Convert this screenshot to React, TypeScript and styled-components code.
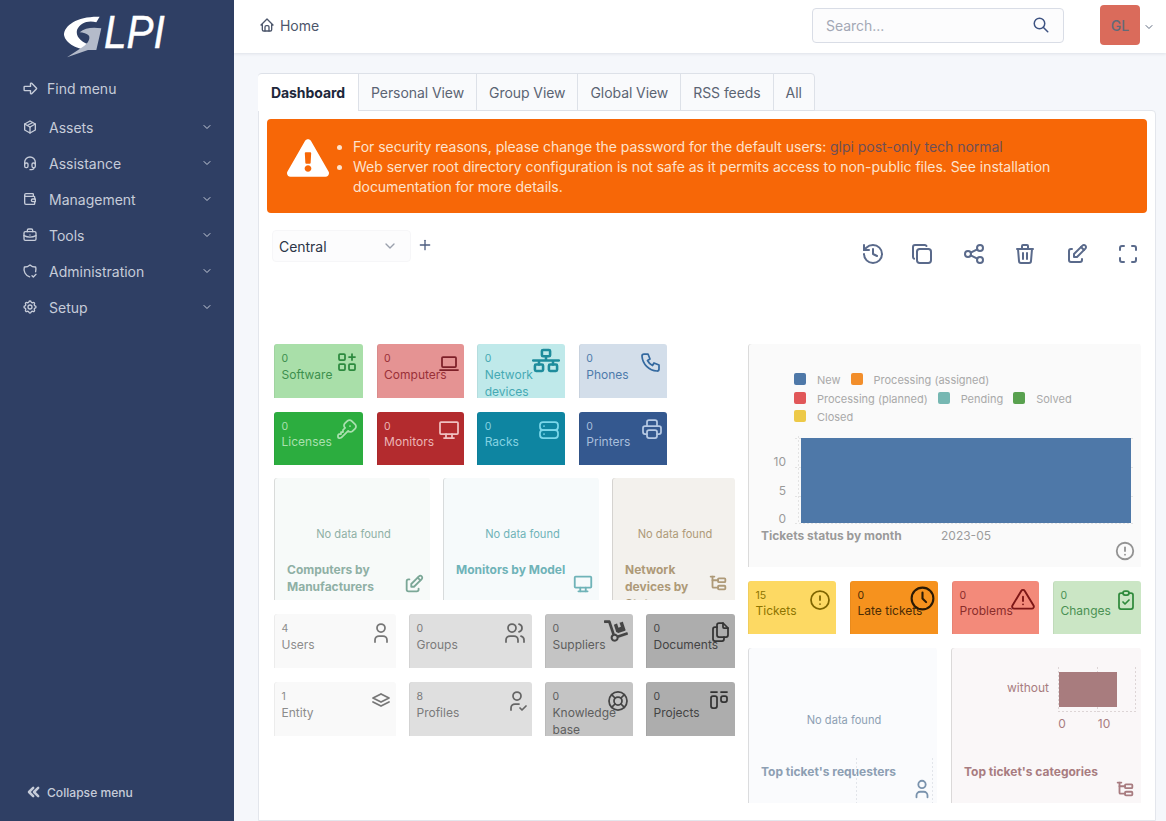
import React from "react";
import styled, { createGlobalStyle } from "styled-components";
import { FaDolly, FaExclamationTriangle } from "react-icons/fa";
import { History } from "lucide-react";
import {
  TbAlertCircle, TbAlertTriangle, TbApps, TbArrowBigRight, TbBriefcase, TbChevronDown, TbChevronsLeft,
  TbClipboardCheck, TbClock, TbCopy, TbDeviceDesktop, TbDeviceLaptop, TbEdit, TbFiles, TbHeadset,
  TbHome, TbKey, TbLayoutKanban, TbLifebuoy, TbMaximize, TbPackage, TbPhone, TbPlus, TbPrinter, TbSearch,
  TbServer, TbSettings, TbShare, TbShieldCheck, TbStack, TbSubtask, TbTrash, TbUser, TbUserCheck,
  TbUsers, TbWallet,
} from "react-icons/tb";

const Global = createGlobalStyle`
  html, body { margin: 0; padding: 0; height: 100%; overflow: hidden; }
  body { font-family: Inter, "Liberation Sans", sans-serif; background: #f5f7fb; color: #1d273b; }
  * { box-sizing: border-box; }
`;

const Page = styled.div`display: flex; width: 1166px; height: 821px; overflow: hidden;`;
const Sidebar = styled.aside`
  width: 234px; flex: none; background: #2f3f64; color: #c6ccd9; display: flex; flex-direction: column;
  font-size: 14px;
`;
const LogoWrap = styled.div`height: 70px; display: flex; padding: 15px 0 0 63px;`;
const LogoText = styled.span`
  font-family: "Liberation Sans", sans-serif; font-style: italic; font-size: 47px; line-height: 38px; color: #fff;
  -webkit-text-stroke: 0.5px #fff; margin: -2px 0 0 1px; transform: scaleX(.86); transform-origin: left; width: 60px;
`;
const FindRow = styled.div`
  display: flex; align-items: center; height: 36px; padding-left: 22px; gap: 8px; margin-bottom: 3px;
`;
const MenuRow = styled.div`
  display: flex; align-items: center; height: 36px; padding: 0 21.5px 0 22px; gap: 11px;
  & > span { flex: 1; }
`;
const Spacer = styled.div`flex: 1;`;
const Collapse = styled.div`
  display: flex; align-items: center; gap: 3px; height: 36px; padding-left: 24px; margin-bottom: 11px; font-size: 12.1px; font-weight: 500;
`;
const Main = styled.main`flex: 1; display: flex; flex-direction: column; min-width: 0;`;
const Header = styled.header`
  height: 53px; flex: none; background: #fff; box-shadow: 0 1px 3px rgba(30,40,70,.1); display: flex; align-items: center;
  padding: 0 11px 0 25px; position: relative; z-index: 1;
`;
const Crumb = styled.div`display: flex; align-items: center; gap: 5px; font-size: 14px; letter-spacing: -0.03px; color: #4c566b; flex: 1; margin-bottom: 3px;`;
const SearchBox = styled.div`
  width: 252px; height: 35px; margin-bottom: 3px; border: 1px solid #d9dde6; border-radius: 4px; background: #fcfcfd; display: flex; align-items: center;
  justify-content: space-between; padding: 0 13px; font-size: 14px; letter-spacing: -0.03px; color: #a3a8b5; margin-right: 36px;
`;
const Avatar = styled.div`
  width: 40px; height: 40px; background: #da6b5b; border-radius: 4px; color: #626a78; font-size: 14px; font-weight: 500;
  display: flex; align-items: center; justify-content: center; margin-bottom: 3px; margin-right: 3px;
`;
const Content = styled.div`flex: 1; padding: 20px 10px 0 24px; display: flex; flex-direction: column; min-height: 0;`;
const Tabs = styled.nav`display: flex; height: 38px; flex: none; position: relative; z-index: 1; margin-bottom: -1px;`;
const Tab = styled.div<{ $active?: boolean }>`
  display: flex; align-items: center; padding: 0 12px; font-size: 14px; letter-spacing: -0.07px;
  border: 1px solid #dde1e8; border-left-width: ${(p) => (p.$active ? 0 : 1)}px; margin-left: ${(p) => (p.$active ? 0 : -1)}px;
  border-bottom-color: ${(p) => (p.$active ? "#fff" : "#dde1e8")};
  border-radius: ${(p) => (p.$active ? "4px 0 0 0" : 0)};
  background: ${(p) => (p.$active ? "#fff" : "#f9fafc")};
  color: ${(p) => (p.$active ? "#1d273b" : "#5b6473")};
  font-weight: ${(p) => (p.$active ? 700 : 400)};
  &:first-child { margin-left: 0; padding: 0 13px; }
  &:last-child { border-radius: 0 4px 0 0; }
`;
const Panel = styled.section`
  flex: 1; background: #fff; border: 1px solid #e3e6ec; border-radius: 0 4px 0 0; padding: 8px 8px 0 8px; min-height: 0; overflow: hidden;
`;
const Alert = styled.div`
  height: 94px; background: #f76707; border-radius: 4px; color: #fde3cd; display: flex; padding: 18px 0 0 20px; font-size: 14px; letter-spacing: -0.03px; line-height: 20px;
`;
const AlertIcon = styled.div`width: 42px; flex: none; color: #fff; line-height: 0;`;
const AlertList = styled.ul`margin: 0; padding: 0 80px 0 24px;`;
const AlertLink = styled.span`color: #6d4f57;`;
const Toolbar = styled.div`display: flex; height: 131px; align-items: flex-start; padding: 17px 0 0 5px;`;
const Select = styled.div`
  width: 139px; height: 32px; background: #fcfcfd; border: 1px solid #f6f6f8; border-radius: 4px; display: flex; align-items: center; justify-content: space-between;
  padding: 0 12px 0 6px; font-size: 14px; letter-spacing: -0.03px; color: #2c3547;
`;
const PlusBtn = styled.div`margin-left: 6px; color: #4d5d80; line-height: 0; margin-top: 7px;`;
const Actions = styled.div`
  margin-left: auto; display: flex; gap: 27.4px; color: #5a6a8b; line-height: 0; margin-top: 12px; margin-right: 7px;
`;
const HistoryIcon = styled(History)`margin-right: -2px;`;
const Board = styled.div`display: flex; gap: 13px; padding-left: 7px;`;
const Column = styled.div<{ $w: number }>`display: flex; flex-direction: column; gap: 14px; width: ${(p) => p.$w}px; flex: none;`;
const Row = styled.div<{ $gap?: number; $pull?: boolean }>`
  display: flex; gap: ${(p) => p.$gap ?? 13}px; margin-top: ${(p) => (p.$pull ? -1 : 0)}px;
`;
const Stat = styled.div<{ $w: number; $bg: string; $fg: string; $h: number }>`
  width: ${(p) => p.$w}px; height: ${(p) => p.$h}px; background: ${(p) => p.$bg}; color: ${(p) => p.$fg}; position: relative; overflow: hidden;
  border-radius: 3px 3px 0 0; padding: 8px 7.5px; font-size: 12px; line-height: 17px; box-shadow: inset 1px 0 0 rgba(0,0,0,.05);
`;
const StatNum = styled.div<{ $tight: boolean }>`
  font-size: 10.5px; line-height: 14px; margin-bottom: ${(p) => (p.$tight ? -1.5 : -0.5)}px;
`;
const StatIcon = styled.div<{ $c: string; $t?: number; $r?: number }>`
  position: absolute; top: ${(p) => p.$t ?? 6}px; right: ${(p) => p.$r ?? 4}px; color: ${(p) => p.$c}; line-height: 0;
`;
const Widget = styled.div<{ $w: number; $h: number; $bg: string; $fg: string }>`
  width: ${(p) => p.$w}px; height: ${(p) => p.$h}px; background: ${(p) => p.$bg}; color: ${(p) => p.$fg}; position: relative; overflow: hidden;
  border-radius: 3px 3px 0 0; box-shadow: inset 1px 0 0 rgba(0,0,0,.12); font-size: 11.1px; flex: none;
`;
const NoData = styled.div<{ $top: number }>`text-align: center; padding: ${(p) => p.$top}px 0 0 3px; line-height: 14px;`;
const WTitle = styled.div<{ $top: number; $w?: number }>`
  font-size: 12px; font-weight: 700; line-height: 17px; padding: ${(p) => p.$top}px 0 0 13px; ${(p) => (p.$w ? `width: ${p.$w}px;` : "")}
`;
const WIcon = styled.div<{ $c: string; $b?: number; $r?: number }>`
  position: absolute; right: ${(p) => p.$r ?? 5}px; bottom: ${(p) => p.$b ?? 5}px; color: ${(p) => p.$c}; line-height: 0;
`;
const Legend = styled.div`padding: 27px 0 0 46px; color: #a9a9a9; font-size: 11px; line-height: 18.5px; white-space: nowrap;`;
const LegendRow = styled.div`display: flex; align-items: center; height: 18.5px;`;
const Swatch = styled.i<{ $c: string }>`
  width: 12px; height: 12px; background: ${(p) => p.$c}; border-radius: 2px; margin-right: 11px; margin-top: -2px; flex: none;
`;
const LegendText = styled.span`margin-right: 10px;`;
const ChartSvg = styled.svg`display: block; margin-top: 7px;`;
const ChartFoot = styled.div`display: flex; font-size: 12px; line-height: 17px; margin-top: 3px; padding-left: 13px; color: #9c9c9c;`;
const ChartFootTitle = styled.span`font-weight: 700; width: 180px; color: #9a9a9a;`;
const SvgLabel = styled.text<{ $c: string }>`font: 12px Inter, sans-serif; fill: ${(p) => p.$c};`;
const OverlaySvg = styled.svg`position: absolute; left: 0; top: 0;`;

const NetworkIcon = ({ size, strokeWidth }: { size?: number; strokeWidth?: number }) => (
  <svg width={size} height={size} viewBox="0 0 24 24" fill="none" stroke="currentColor" strokeWidth={strokeWidth} strokeLinecap="round" strokeLinejoin="round">
    <rect x="8.5" y="2.5" width="7" height="5.5" rx="1" />
    <rect x="2.5" y="15" width="7" height="5.5" rx="1" />
    <rect x="14.5" y="15" width="7" height="5.5" rx="1" />
    <path d="M1 11.5h22M12 8v3.5M6 11.5V15M18 11.5V15" />
  </svg>
);

type S = { n: number; t: string; w: number; bg: string; fg: string; ic: string; Icon: any; size?: number; top?: number; right?: number; sw?: number };
const row1: S[] = [
  { n: 0, t: "Software", w: 89, bg: "#a9dfa9", fg: "#3d8f4d", ic: "#2c8a3e", Icon: TbApps },
  { n: 0, t: "Computers", w: 87, bg: "#e59393", fg: "#9a3038", ic: "#7d1f28", Icon: TbDeviceLaptop, top: 7, right: 3 },
  { n: 0, t: "Network devices", w: 88, bg: "#bfe9ea", fg: "#46a9b4", ic: "#1e8c9c", Icon: NetworkIcon, size: 28, top: 3, right: 5, sw: 2.2 },
  { n: 0, t: "Phones", w: 88, bg: "#d3deea", fg: "#4e7bab", ic: "#356aa0", Icon: TbPhone },
];
const row2: S[] = [
  { n: 0, t: "Licenses", w: 89, bg: "#2cad3f", fg: "#a9e0ae", ic: "#a9e0ae", Icon: TbKey, top: 5 },
  { n: 0, t: "Monitors", w: 87, bg: "#b32b2e", fg: "#ecb6b6", ic: "#f0c0c0", Icon: TbDeviceDesktop, right: 3 },
  { n: 0, t: "Racks", w: 88, bg: "#0e85a1", fg: "#85d2e2", ic: "#7ad7ea", Icon: TbServer },
  { n: 0, t: "Printers", w: 88, bg: "#34588f", fg: "#a9bfdc", ic: "#b5c8e3", Icon: TbPrinter, top: 5, right: 3 },
];
const row4: S[] = [
  { n: 4, t: "Users", w: 122, bg: "#f9f9f9", fg: "#8c8c8c", ic: "#777", Icon: TbUser, top: 7, right: 3 },
  { n: 0, t: "Groups", w: 123, bg: "#dfdfdf", fg: "#7b7b7b", ic: "#666", Icon: TbUsers, top: 7, right: 5 },
  { n: 0, t: "Suppliers", w: 88, bg: "#c4c4c4", fg: "#5e5e5e", ic: "#454545", Icon: FaDolly, top: 5, right: 5 },
  { n: 0, t: "Documents", w: 89, bg: "#adadad", fg: "#444", ic: "#333", Icon: TbFiles, top: 6, right: 3 },
];
const row5: S[] = [
  { n: 1, t: "Entity", w: 122, bg: "#f9f9f9", fg: "#8c8c8c", ic: "#777", Icon: TbStack, top: 6, right: 3 },
  { n: 8, t: "Profiles", w: 123, bg: "#dfdfdf", fg: "#7b7b7b", ic: "#666", Icon: TbUserCheck, top: 7, right: 3 },
  { n: 0, t: "Knowledge base", w: 88, bg: "#c4c4c4", fg: "#5e5e5e", ic: "#454545", Icon: TbLifebuoy, top: 7, right: 3 },
  { n: 0, t: "Projects", w: 89, bg: "#adadad", fg: "#444", ic: "#333", Icon: TbLayoutKanban, top: 6, right: 4 },
];
const row6: S[] = [
  { n: 15, t: "Tickets", w: 88, bg: "#fdd963", fg: "#8d7400", ic: "#7f6500", Icon: TbAlertCircle, top: 7 },
  { n: 0, t: "Late tickets", w: 88, bg: "#f6921e", fg: "#4b2c05", ic: "#2b1a05", Icon: TbClock, size: 29, top: 3, right: 1 },
  { n: 0, t: "Problems", w: 87, bg: "#f38a7a", fg: "#8a2d2a", ic: "#7d1616", Icon: TbAlertTriangle, size: 26, top: 6, right: 3 },
  { n: 0, t: "Changes", w: 88, bg: "#cbe6c5", fg: "#4a9153", ic: "#2f8a3c", Icon: TbClipboardCheck, top: 7, right: 3 },
];

const StatCard = ({ s, h }: { s: S; h: number }) => (
  <Stat $w={s.w} $bg={s.bg} $fg={s.fg} $h={h}>
    <StatNum $tight={h === 53}>{s.n}</StatNum>
    {s.t}
    <StatIcon $c={s.ic} $t={s.top} $r={s.right}>
      <s.Icon size={s.size ?? 24} strokeWidth={s.sw ?? 1.75} />
    </StatIcon>
  </Stat>
);
const StatRow = ({ items, h, gap }: { items: S[]; h: number; gap: number }) => (
  <Row $gap={gap}>{items.map((s) => <StatCard key={s.t} s={s} h={h} />)}</Row>
);

const MENU: [string, any][] = [
  ["Assets", TbPackage], ["Assistance", TbHeadset], ["Management", TbWallet],
  ["Tools", TbBriefcase], ["Administration", TbShieldCheck], ["Setup", TbSettings],
];
const Logo = () => (
  <LogoWrap>
    <svg width="40" height="43.3" viewBox="0 0 120 130" aria-hidden="true">
      <path d="M110 5 L100 22 C75 14 50 25 42 45 C38 62 50 78 75 88 L95 92 L92 105 C50 108 8 88 3 60 C3 30 45 3 110 5 Z" fill="#fff" />
      <path d="M50 52 C65 38 90 36 115 40 L100 105 L75 105 L12 127 L60 95 C75 85 82 72 78 62 C72 56 60 52 50 52 Z" fill="#b4bbca" />
    </svg>
    <LogoText>LPI</LogoText>
  </LogoWrap>
);
const Dotted = ({ x1, y1, x2, y2, c }: { x1: number; y1: number; x2: number; y2: number; c: string }) => (
  <line x1={x1} y1={y1} x2={x2} y2={y2} stroke={c} strokeDasharray="2 2" />
);

export default function App() {
  return (
    <Page>
      <Global />
      <Sidebar>
        <Logo />
        <FindRow><TbArrowBigRight size={17} />Find menu</FindRow>
        {MENU.map(([label, Icon]) => (
          <MenuRow key={label}>
            <Icon size={16} />
            <span>{label}</span>
            <TbChevronDown size={12} />
          </MenuRow>
        ))}
        <Spacer />
        <Collapse><TbChevronsLeft size={20} strokeWidth={3} />Collapse menu</Collapse>
      </Sidebar>
      <Main>
        <Header>
          <Crumb><TbHome size={16} />Home</Crumb>
          <SearchBox>Search...<TbSearch size={18} color="#3e5382" /></SearchBox>
          <Avatar>GL</Avatar>
          <TbChevronDown size={12} color="#5f6b80" />
        </Header>
        <Content>
          <Tabs>
            <Tab $active>Dashboard</Tab>
            <Tab>Personal View</Tab>
            <Tab>Group View</Tab>
            <Tab>Global View</Tab>
            <Tab>RSS feeds</Tab>
            <Tab>All</Tab>
          </Tabs>
          <Panel>
            <Alert>
              <AlertIcon><FaExclamationTriangle size={42} /></AlertIcon>
              <AlertList>
                <li>For security reasons, please change the password for the default users: <AlertLink>glpi post-only tech normal</AlertLink></li>
                <li>Web server root directory configuration is not safe as it permits access to non-public files. See installation documentation for more details.</li>
              </AlertList>
            </Alert>
            <Toolbar>
              <Select>Central<TbChevronDown size={16} color="#9aa0ac" /></Select>
              <PlusBtn><TbPlus size={16} /></PlusBtn>
              <Actions>
                <HistoryIcon size={24} /><TbCopy size={24} /><TbShare size={24} />
                <TbTrash size={24} /><TbEdit size={24} /><TbMaximize size={24} />
              </Actions>
            </Toolbar>
            <Board>
              <Column $w={461}>
                <StatRow items={row1} h={54} gap={13.6} />
                <StatRow items={row2} h={53} gap={13.6} />
                <Row $pull>
                  <Widget $w={156} $h={122} $bg="#f7faf9" $fg="#8fb0a5">
                    <NoData $top={49}>No data found</NoData>
                    <WTitle $top={20} $w={120}>Computers by Manufacturers</WTitle>
                    <WIcon $c="#7ba797"><TbEdit size={22} /></WIcon>
                  </Widget>
                  <Widget $w={156} $h={122} $bg="#f6fafb" $fg="#6fb3b8">
                    <NoData $top={49}>No data found</NoData>
                    <WTitle $top={20}>Monitors by Model</WTitle>
                    <WIcon $c="#6fb3b8"><TbDeviceDesktop size={22} /></WIcon>
                  </Widget>
                  <Widget $w={123} $h={122} $bg="#f3f1ed" $fg="#ae9a78">
                    <NoData $top={49}>No data found</NoData>
                    <WTitle $top={20} $w={80}>Network devices by Status</WTitle>
                    <WIcon $c="#ae9a78" $b={6} $r={6}><TbSubtask size={22} /></WIcon>
                  </Widget>
                </Row>
                <StatRow items={row4} h={54} gap={13} />
                <StatRow items={row5} h={53.5} gap={13} />
              </Column>
              <Column $w={393}>
                <Widget $w={393} $h={223} $bg="#fafafa" $fg="#a9a9a9">
                  <Legend>
                    <LegendRow><Swatch $c="#4e78a8" /><LegendText>New</LegendText><Swatch $c="#f28e2b" /><LegendText>Processing (assigned)</LegendText></LegendRow>
                    <LegendRow><Swatch $c="#e15759" /><LegendText>Processing (planned)</LegendText><Swatch $c="#76b7b2" /><LegendText>Pending</LegendText><Swatch $c="#59a14f" /><LegendText>Solved</LegendText></LegendRow>
                    <LegendRow><Swatch $c="#edc948" /><LegendText>Closed</LegendText></LegendRow>
                  </Legend>
                  <ChartSvg width="393" height="90" viewBox="0 0 393 90">
                    <g>
                      {[4, 33, 62, 89].map((y) => <Dotted key={y} x1={47} x2={387} y1={y + .5} y2={y + .5} c="#e3e3e3" />)}
                      <Dotted x1={50.5} x2={50.5} y1={2} y2={90} c="#e3e3e3" />
                    </g>
                    <rect x="53" y="4" width="330" height="85" fill="#4e78a8" />
                    <SvgLabel $c="#9a9a9a" x="38" y="32" textAnchor="end">10</SvgLabel>
                    <SvgLabel $c="#9a9a9a" x="38" y="61" textAnchor="end">5</SvgLabel>
                    <SvgLabel $c="#9a9a9a" x="38" y="89" textAnchor="end">0</SvgLabel>
                  </ChartSvg>
                  <ChartFoot><ChartFootTitle>Tickets status by month</ChartFootTitle>2023-05</ChartFoot>
                  <WIcon $c="#939393" $b={5} $r={5}><TbAlertCircle size={22} /></WIcon>
                </Widget>
                <StatRow items={row6} h={53} gap={14} />
                <Row $gap={14}>
                  <Widget $w={189} $h={155} $bg="#fafbfd" $fg="#8d9fb3">
                    <NoData $top={65}>No data found</NoData>
                    <WTitle $top={36}>Top ticket's requesters</WTitle>
                    <OverlaySvg width="189" height="155" viewBox="0 0 189 155">
                      <Dotted x1={108.5} x2={108.5} y1={110} y2={156} c="#e2e5ea" />
                      <Dotted x1={184.5} x2={184.5} y1={110} y2={156} c="#e2e5ea" />
                    </OverlaySvg>
                    <WIcon $c="#7a93ad" $b={3} $r={4}><TbUser size={22} /></WIcon>
                  </Widget>
                  <Widget $w={190} $h={155} $bg="#faf7f8" $fg="#a87c80">
                    <OverlaySvg width="190" height="155" viewBox="0 0 190 155">
                      <Dotted x1={107.5} x2={107.5} y1={19} y2={64} c="#ddd5d6" />
                      <Dotted x1={146.5} x2={146.5} y1={19} y2={64} c="#ddd5d6" />
                      <Dotted x1={184.5} x2={184.5} y1={19} y2={64} c="#ddd5d6" />
                      <Dotted x1={107} x2={185} y1={63.5} y2={63.5} c="#ddd5d6" />
                      <rect x="108" y="24" width="58" height="35" fill="#a87c7e" />
                      <SvgLabel $c="#a87c80" x="98" y="44" textAnchor="end">without</SvgLabel>
                      <SvgLabel $c="#a87c80" x="111" y="80" textAnchor="middle">0</SvgLabel>
                      <SvgLabel $c="#a87c80" x="153" y="80" textAnchor="middle">10</SvgLabel>
                    </OverlaySvg>
                    <WTitle $top={115}>Top ticket's categories</WTitle>
                    <WIcon $c="#a87c80" $b={3} $r={5}><TbSubtask size={22} /></WIcon>
                  </Widget>
                </Row>
              </Column>
            </Board>
          </Panel>
        </Content>
      </Main>
    </Page>
  );
}
